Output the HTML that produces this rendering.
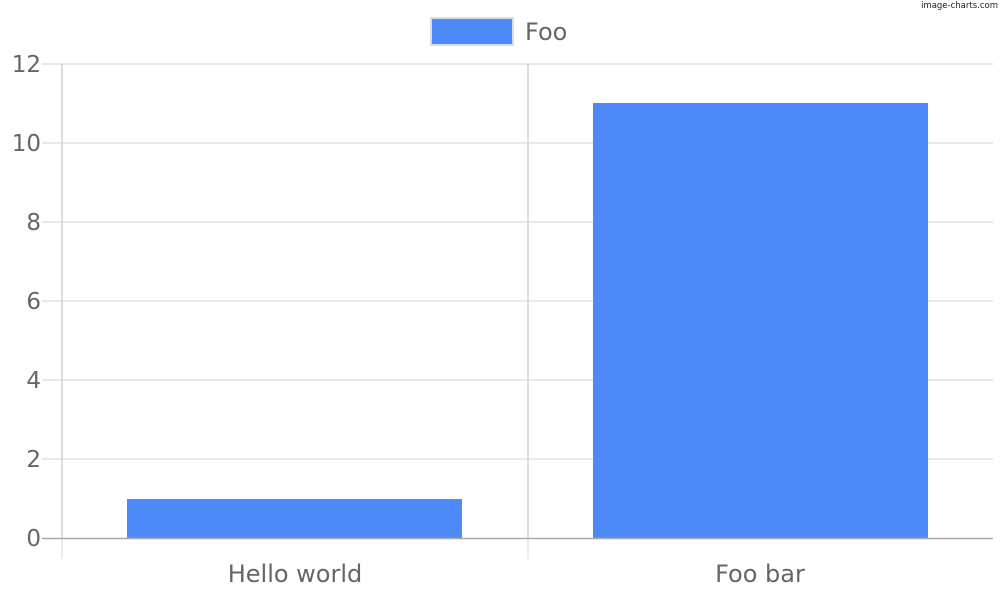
<!DOCTYPE html>
<html><head><meta charset="utf-8"><style>
html,body{margin:0;padding:0;background:#fff;width:1000px;height:600px;overflow:hidden}
svg text{font-family:"DejaVu Sans","Liberation Sans",sans-serif;fill:#666}
</style></head><body>
<svg width="1000" height="600" viewBox="0 0 1000 600" xmlns="http://www.w3.org/2000/svg">
<g stroke="#e0e0e0" stroke-width="1.5">
<line x1="42" y1="64" x2="993" y2="64"/>
<line x1="42" y1="143" x2="993" y2="143"/>
<line x1="42" y1="222" x2="993" y2="222"/>
<line x1="42" y1="301" x2="993" y2="301"/>
<line x1="42" y1="380" x2="993" y2="380"/>
<line x1="42" y1="459" x2="993" y2="459"/>
</g>
<g stroke="#d0d0d0" stroke-width="1.5">
<line x1="62" y1="64" x2="62" y2="538"/>
<line x1="528" y1="64" x2="528" y2="538"/>
</g>
<g stroke="#e6e6e6" stroke-width="1.5">
<line x1="62" y1="538" x2="62" y2="559"/>
<line x1="528" y1="538" x2="528" y2="559"/>
</g>
<rect x="127" y="499" width="335" height="39" fill="#4d89f9"/>
<rect x="593" y="103" width="335" height="435" fill="#4d89f9"/>
<line x1="42" y1="538.5" x2="993" y2="538.5" stroke="#aaa" stroke-width="1.5"/>
<g font-size="23" text-anchor="end">
<text x="41" y="72">12</text>
<text x="41" y="151">10</text>
<text x="41" y="230">8</text>
<text x="41" y="309">6</text>
<text x="41" y="388">4</text>
<text x="41" y="467">2</text>
<text x="41" y="546">0</text>
</g>
<g font-size="24" text-anchor="middle">
<text x="295" y="582">Hello world</text>
<text x="760" y="582">Foo bar</text>
</g>
<rect x="431" y="18" width="82" height="27" fill="#4d89f9" stroke="#ddd" stroke-width="2"/>
<text x="525" y="40" font-size="24">Foo</text>
<text x="998" y="8" font-size="8.5" text-anchor="end" style="fill:#222">image-charts.com</text>
</svg>
</body></html>
